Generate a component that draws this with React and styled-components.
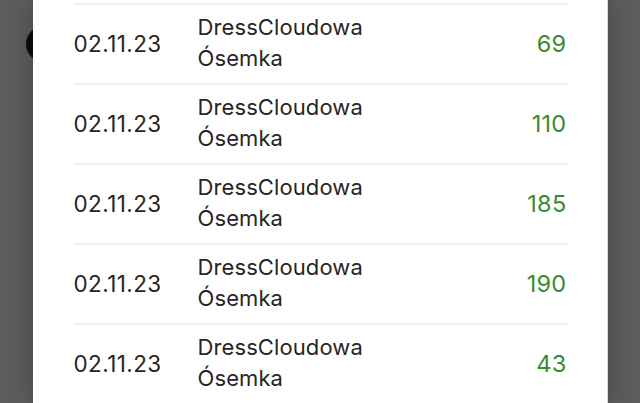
import React from 'react';
import styled, { createGlobalStyle } from 'styled-components';

const GlobalStyle = createGlobalStyle`
    html, body {
        margin: 0;
        padding: 0;
        height: 100%;
        overflow: hidden;
    }
    body {
        background: #5c5d5f;
        font-family: Inter, "Liberation Sans", Arial, sans-serif;
    }
`;

const Screen = styled.div`
    position: relative;
    width: 640px;
    height: 403px;
    display: flex;
    justify-content: center;
    overflow: hidden;
`;

const BackButton = styled.div`
    position: absolute;
    left: 26px;
    top: 26px;
    width: 36px;
    height: 36px;
    border-radius: 50%;
    background: #0d0d0d;
`;

const Modal = styled.div`
    position: relative;
    z-index: 1;
    width: 575px;
    margin-left: 32px;
    margin-right: 32px;
    background: #fff;
    border-right: 1px solid #d6d6d6;
    box-shadow: 0 0 28px rgba(0, 0, 0, 0.28);
    padding: 3px 40px 0 41px;
    box-sizing: border-box;
`;

const List = styled.div`
    display: flex;
    flex-direction: column;
`;

const Row = styled.div`
    display: grid;
    grid-template-columns: 124px 1fr auto;
    align-items: center;
    height: 80px;
    box-sizing: border-box;
    border-top: 2px solid #efefef;
    padding-bottom: 2px;
`;

const DateCell = styled.div`
    font-size: 22.5px;
    color: #262626;
    letter-spacing: 0.4px;
`;

const Name = styled.div`
    font-size: 22px;
    line-height: 31px;
    color: #262626;
    letter-spacing: 0.1px;
`;

const Amount = styled.div`
    font-size: 23.5px;
    color: #3b8a2e;
    text-align: right;
    letter-spacing: 0.3px;
`;

const rows = [
    { date: '02.11.23', amount: 69 },
    { date: '02.11.23', amount: 110 },
    { date: '02.11.23', amount: 185 },
    { date: '02.11.23', amount: 190 },
    { date: '02.11.23', amount: 43 },
];

export default function App() {
    return (
        <>
            <GlobalStyle />
            <Screen>
                <BackButton />
                <Modal>
                    <List>
                        {rows.map((r, i) => (
                            <Row key={i}>
                                <DateCell>{r.date}</DateCell>
                                <Name>
                                    DressCloudowa
                                    <br />
                                    Ósemka
                                </Name>
                                <Amount>{r.amount}</Amount>
                            </Row>
                        ))}
                        <Row />
                    </List>
                </Modal>
            </Screen>
        </>
    );
}
